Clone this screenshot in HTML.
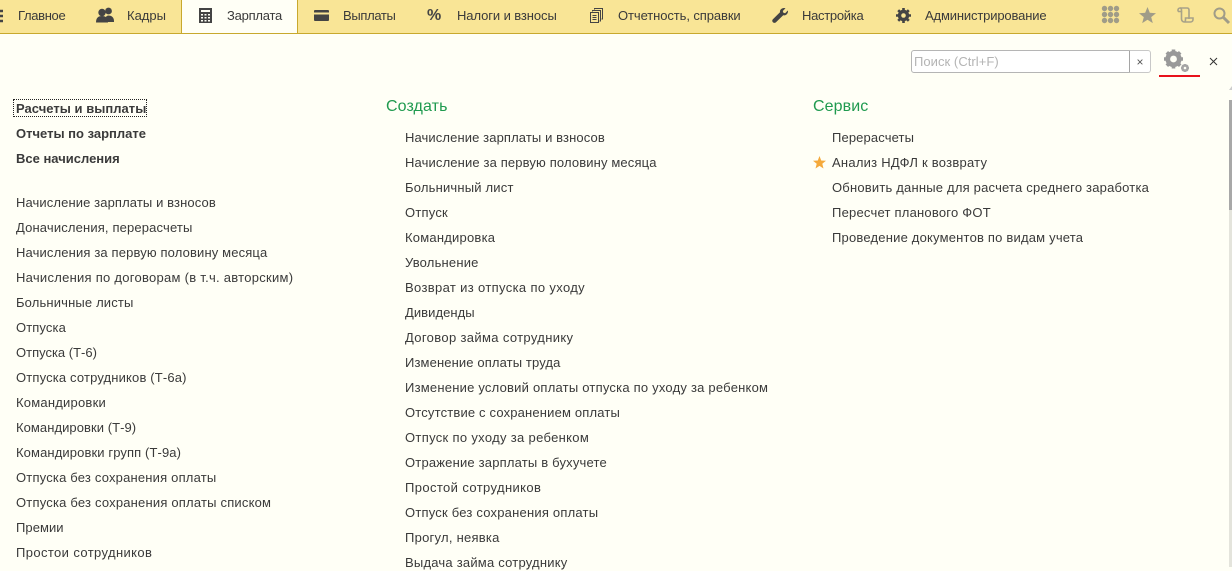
<!DOCTYPE html>
<html lang="ru"><head><meta charset="utf-8"><title>Зарплата</title>
<style>
html,body{margin:0;padding:0}
body{width:1232px;height:567px;overflow:hidden;background:#fffff6;position:relative;font-family:"Liberation Sans",Arial,sans-serif;font-size:13px;color:#3a3a3a}
.bar{position:absolute;left:0;top:0;width:1232px;height:33px;background:#f9e596;border-bottom:1px solid #c8a92e}
.tab{position:absolute;left:181px;top:0;width:115px;height:33px;background:#fffff6;border-left:1px solid #c8a92e;border-right:1px solid #c8a92e;}
.t{position:absolute;white-space:nowrap;line-height:16px}
.n{top:7px;font-size:13px;color:#3a3a3a}
.b{font-weight:bold}
.h{font-size:16px;color:#1f9a4f;line-height:20px;letter-spacing:.1px}
svg{position:absolute;overflow:visible}
.search{position:absolute;left:911px;top:50px;width:217px;height:21px;background:#fff;border:1px solid #b5b5b5;border-radius:3px 0 0 3px;color:#b4b4b4;font-size:13px;letter-spacing:.05px;line-height:22px;text-indent:2px;}
.clr{position:absolute;left:1129px;top:50px;width:20px;height:21px;background:#fff;border:1px solid #c8c8c8;border-left:1px solid #a5a5a5;border-radius:0 3px 3px 0;color:#555;font-size:12px;line-height:22px;text-align:center}
.red{position:absolute;left:1159px;top:75px;width:41px;height:2px;background:#e8121c}
.focus{position:absolute;left:13px;top:99px;width:132px;height:16px;border:1px dotted #222}
.sb{position:absolute;left:1229px;top:100px;width:3px;height:110px;background:#a8a8a8}
.sb2{position:absolute;left:1229px;top:210px;width:3px;height:357px;background:#e4e4dc}
</style></head><body>
<div class="bar"></div>
<div class="tab"></div>
<svg style="left:0;top:10px" width="4" height="13"><path d="M0 1h3M0 6h3M0 11h3" stroke="#444" stroke-width="2.4"/></svg>
<span class="t n" style="left:18px;top:8px;letter-spacing:-.33px">Главное</span>
<svg style="left:96px;top:7px" width="18" height="16" viewBox="0 0 18 16"><circle cx="12.500" cy="4" r="3.400" fill="#444"/><path d="M9 15c0-4 1-6.500 3.500-6.500S18 10 18 14v1z" fill="#444"/><circle cx="6" cy="5.500" r="3.700" fill="#444"/><path d="M0 15.500c0-4.500 2-6.500 6-6.500s6 2 6 6.500z" fill="#444"/></svg>
<span class="t n" style="left:127px;top:8px;letter-spacing:0">Кадры</span>
<svg style="left:199px;top:8px" width="13" height="15" viewBox="0 0 13 15"><rect x="0" y="0" width="13" height="15" fill="#444"/><rect x="2" y="2" width="9" height="2" fill="#fffff6"/><path d="M2 6h2v1.500H2zM5.500 6h2v1.500h-2zM9 6h2v1.500H9zM2 9h2v1.500H2zM5.500 9h2v1.500h-2zM9 9h2v1.500H9zM2 12h2v1.500H2zM5.500 12h2v1.500h-2zM9 12h2v1.500H9z" fill="#fffff6"/></svg>
<span class="t n" style="left:227px;top:8px;letter-spacing:-.24px">Зарплата</span>
<svg style="left:314px;top:10px" width="15" height="11" viewBox="0 0 15 11"><rect width="15" height="11" rx="1" fill="#444"/><rect x="0" y="2.500" width="15" height="2" fill="#f9e596"/></svg>
<span class="t n" style="left:343px;top:8px;letter-spacing:-.33px">Выплаты</span>
<span class="t" style="left:427px;top:8px;font-size:16px;font-weight:bold;color:#444">%</span>
<span class="t n" style="left:457px;top:8px;letter-spacing:-.09px">Налоги и взносы</span>
<svg style="left:590px;top:8px" width="13" height="15" viewBox="0 0 13 15" fill="none" stroke="#444"><path d="M4.500 1.500V.5h8v10.500h-1"/><path d="M2.500 3.500v-1h8v10.500h-1"/><rect x=".5" y="4.500" width="8" height="10" fill="#f9e596"/><path d="M2.500 7.500h4M2.500 9.500h4M2.500 11.500h4"/></svg>
<span class="t n" style="left:618px;top:8px;letter-spacing:-.09px">Отчетность, справки</span>
<svg style="left:772px;top:8px" width="16" height="15" viewBox="0 0 16 15"><path d="M16 3.200c0 2.600-2.300 4.600-4.800 4.100L4 14.200c-.9.900-2.200.9-3.100 0s-.9-2.100 0-3L8 4.200C7.600 1.800 9.600 0 12 0c.6 0 1.100.1 1.500.3L10.800 3l.6 1.700 1.700.6L15.800 2.500c.1.200.2.500.2.700z" fill="#444"/></svg>
<span class="t n" style="left:802px;top:8px;letter-spacing:-.29px">Настройка</span>
<svg style="left:896px;top:8px" width="15" height="15" viewBox="0 0 15 15"><circle cx="7.500" cy="7.500" r="4.200" fill="none" stroke="#444" stroke-width="3"/><path d="M7.500 0v15M0 7.500h15M2.200 2.200l10.600 10.600M12.800 2.200L2.200 12.800" stroke="#444" stroke-width="2.600"/><circle cx="7.500" cy="7.500" r="2.300" fill="#f9e596"/></svg>
<span class="t n" style="left:925px;top:8px;letter-spacing:-.15px">Администрирование</span>
<svg style="left:1102px;top:6px" width="17" height="17" viewBox="0 0 17 17" fill="#a09c88"><circle cx="2.500" cy="2.500" r="2.700"/><circle cx="8.500" cy="2.500" r="2.700"/><circle cx="14.500" cy="2.500" r="2.700"/><circle cx="2.500" cy="8.500" r="2.700"/><circle cx="8.500" cy="8.500" r="2.700"/><circle cx="14.500" cy="8.500" r="2.700"/><circle cx="2.500" cy="14.500" r="2.700"/><circle cx="8.500" cy="14.500" r="2.700"/><circle cx="14.500" cy="14.500" r="2.700"/></svg>
<svg style="left:1139px;top:7px" width="17" height="16" viewBox="0 0 17 16"><path d="M8.500 0l2.300 5.800 6.200.4-4.800 3.900 1.600 6-5.300-3.300-5.300 3.300 1.600-6L0 6.200l6.200-.4z" fill="#a09c88"/></svg>
<svg style="left:1177px;top:7px" width="17" height="16" viewBox="0 0 17 16" fill="none" stroke="#a8a288" stroke-width="1.600"><path d="M1 4.500V3C1 1.800 2 1 3 1h7c1.200 0 2 .8 2 2v9"/><path d="M1 4.500h3.500V3C4.500 1.800 3.800 1 3 1"/><path d="M4.500 4.500V12c0 1.500 1.200 3 2.800 3h6.200c1.300 0 2.500-1 2.500-2.500V11H8.500v1.500c0 1.400-.5 2.500-1.200 2.500"/></svg>
<svg style="left:1213px;top:7px" width="17" height="17" viewBox="0 0 17 17" fill="none" stroke="#a09c88" stroke-width="2"><circle cx="6.500" cy="6.500" r="5"/><path d="M10.500 10.500l5.500 5.500" stroke-width="3"/></svg>

<div class="search">Поиск (Ctrl+F)</div><div class="clr">×</div>
<svg style="left:1164px;top:49px" width="27" height="24" viewBox="0 0 27 24"><g stroke="#999"><circle cx="9.500" cy="10" r="5.800" fill="none" stroke-width="4.600"/><path d="M9.500 .5v19M0 10h19M2.800 3.300l13.400 13.400M16.200 3.300L2.800 16.700" stroke-width="3.600"/></g><circle cx="9.500" cy="10" r="3.400" fill="#fffff6"/><g stroke="#a5a5a5"><circle cx="21" cy="19" r="2.800" fill="none" stroke-width="2.200"/><path d="M21 15v8M17 19h8M18.200 16.200l5.600 5.600M23.800 16.200l-5.600 5.600" stroke-width="1.700"/></g><circle cx="21" cy="19" r="1.300" fill="#fffff6"/></svg>
<div class="red"></div>
<svg style="left:1209px;top:57px" width="9" height="9" viewBox="0 0 9 9"><path d="M1 1l7 7M8 1L1 8" stroke="#333" stroke-width="1"/></svg>
<svg style="left:1229px;top:86px" width="3" height="4"><path d="M0 4L3 0v4z" fill="#ccc"/></svg>
<div class="sb"></div><div class="sb2"></div>

<div class="focus"></div>
<span class="t b" style="left:16px;top:101px;letter-spacing:.03px">Расчеты и выплаты</span>
<span class="t b" style="left:16px;top:126px;letter-spacing:0">Отчеты по зарплате</span>
<span class="t b" style="left:16px;top:151px;letter-spacing:0">Все начисления</span>
<span class="t" style="left:16px;top:195px;letter-spacing:.11px">Начисление зарплаты и взносов</span>
<span class="t" style="left:16px;top:220px;letter-spacing:.15px">Доначисления, перерасчеты</span>
<span class="t" style="left:16px;top:245px;letter-spacing:.14px">Начисления за первую половину месяца</span>
<span class="t" style="left:16px;top:270px;letter-spacing:.27px">Начисления по договорам (в т.ч. авторским)</span>
<span class="t" style="left:16px;top:295px;letter-spacing:.15px">Больничные листы</span>
<span class="t" style="left:16px;top:320px;letter-spacing:.11px">Отпуска</span>
<span class="t" style="left:16px;top:345px;letter-spacing:0">Отпуска (Т-6)</span>
<span class="t" style="left:16px;top:370px;letter-spacing:.16px">Отпуска сотрудников (Т-6а)</span>
<span class="t" style="left:16px;top:395px;letter-spacing:.22px">Командировки</span>
<span class="t" style="left:16px;top:420px;letter-spacing:.06px">Командировки (Т-9)</span>
<span class="t" style="left:16px;top:445px;letter-spacing:.11px">Командировки групп (Т-9а)</span>
<span class="t" style="left:16px;top:470px;letter-spacing:.19px">Отпуска без сохранения оплаты</span>
<span class="t" style="left:16px;top:495px;letter-spacing:.2px">Отпуска без сохранения оплаты списком</span>
<span class="t" style="left:16px;top:520px;letter-spacing:.06px">Премии</span>
<span class="t" style="left:16px;top:545px;letter-spacing:.39px">Простои сотрудников</span>

<span class="t h" style="left:386px;top:97px">Создать</span>
<span class="t" style="left:405px;top:130px;letter-spacing:.11px">Начисление зарплаты и взносов</span>
<span class="t" style="left:405px;top:155px;letter-spacing:.14px">Начисление за первую половину месяца</span>
<span class="t" style="left:405px;top:180px;letter-spacing:.19px">Больничный лист</span>
<span class="t" style="left:405px;top:205px;letter-spacing:.22px">Отпуск</span>
<span class="t" style="left:405px;top:230px;letter-spacing:.22px">Командировка</span>
<span class="t" style="left:405px;top:255px;letter-spacing:.19px">Увольнение</span>
<span class="t" style="left:405px;top:280px;letter-spacing:.35px">Возврат из отпуска по уходу</span>
<span class="t" style="left:405px;top:305px;letter-spacing:.06px">Дивиденды</span>
<span class="t" style="left:405px;top:330px;letter-spacing:.35px">Договор займа сотруднику</span>
<span class="t" style="left:405px;top:355px;letter-spacing:.12px">Изменение оплаты труда</span>
<span class="t" style="left:405px;top:380px;letter-spacing:.22px">Изменение условий оплаты отпуска по уходу за ребенком</span>
<span class="t" style="left:405px;top:405px;letter-spacing:.17px">Отсутствие с сохранением оплаты</span>
<span class="t" style="left:405px;top:430px;letter-spacing:.32px">Отпуск по уходу за ребенком</span>
<span class="t" style="left:405px;top:455px;letter-spacing:.19px">Отражение зарплаты в бухучете</span>
<span class="t" style="left:405px;top:480px;letter-spacing:.39px">Простой сотрудников</span>
<span class="t" style="left:405px;top:505px;letter-spacing:.21px">Отпуск без сохранения оплаты</span>
<span class="t" style="left:405px;top:530px;letter-spacing:.25px">Прогул, неявка</span>
<span class="t" style="left:405px;top:555px;letter-spacing:.22px">Выдача займа сотруднику</span>

<span class="t h" style="left:813px;top:97px">Сервис</span>
<span class="t" style="left:832px;top:130px;letter-spacing:.12px">Перерасчеты</span>
<svg style="left:813px;top:156px" width="13" height="13" viewBox="0 0 13 13"><path d="M6.500 0l1.700 4.500 4.800.3-3.700 3 1.200 4.700-4-2.600-4 2.600 1.200-4.700L0 4.800l4.800-.3z" fill="#f5a93b"/></svg>
<span class="t" style="left:832px;top:155px;letter-spacing:.25px">Анализ НДФЛ к возврату</span>
<span class="t" style="left:832px;top:180px;letter-spacing:.2px">Обновить данные для расчета среднего заработка</span>
<span class="t" style="left:832px;top:205px;letter-spacing:.22px">Пересчет планового ФОТ</span>
<span class="t" style="left:832px;top:230px;letter-spacing:.2px">Проведение документов по видам учета</span>
</body></html>
